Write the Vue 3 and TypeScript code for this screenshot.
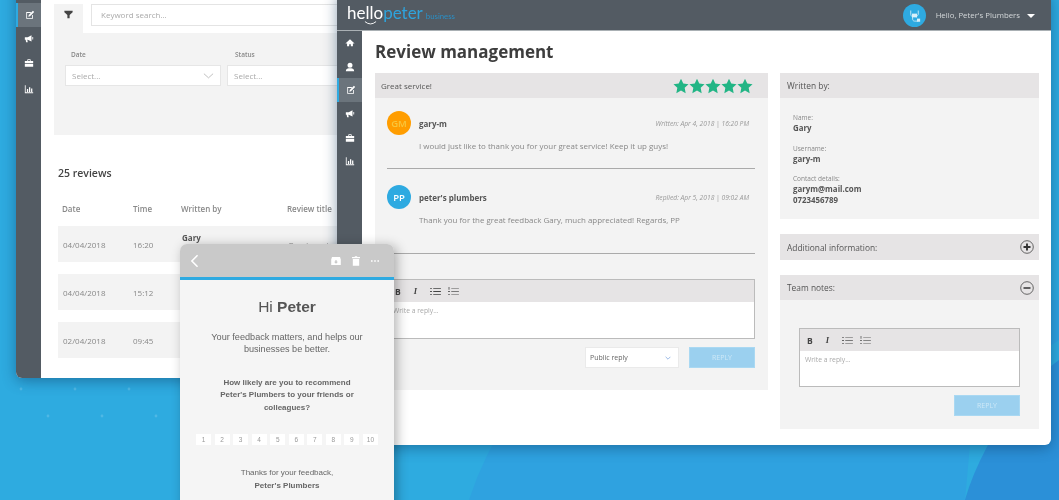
<script setup lang="ts">
interface NavItem {
  name: string
  path: string
}

interface ReviewRow {
  date: string
  time: string
  author: string
  title: string
}

interface Message {
  initials: string
  color: string
  initialsColor: string
  name: string
  stamp: string
  body: string
}

const nav: NavItem[] = [
  { name: 'home', path: 'M12 3 1 13h4v7h5v-5h4v5h5v-7h4z' },
  { name: 'user', path: 'M12 2a5.5 5.5 0 0 1 0 12 5.5 5.5 0 0 1 0-12zM2 22c0-5 4-7 7-7h6c3 0 7 2 7 7z' },
  { name: 'edit', path: 'M3 5h11v2H5v12h12v-7h2v9H3zM19 2l3 3-10 10-4 1 1-4z' },
  { name: 'promo', path: 'M2 8h7l9-5v15l-9-4H8l1 6H5l-1-6H2zM20 7h2v6h-2z' },
  { name: 'case', path: 'M9 3h6l1 1v3h6v5H2V7h6V4zm1 2v2h4V5zM2 14h20v7H2z' },
  { name: 'chart', path: 'M2 3h2v17h18v2H2zM7 12h3v7H7zM12 8h3v11h-3zM17 11h3v8h-3z' },
]

// the popup covers the last columns of rows two and three
const reviews: ReviewRow[] = [
  { date: '04/04/2018', time: '16:20', author: 'Gary', title: 'Great service!' },
  { date: '04/04/2018', time: '15:12', author: '', title: '' },
  { date: '02/04/2018', time: '09:45', author: '', title: '' },
]

const messages: Message[] = [
  {
    initials: 'GM',
    color: '#ff9d00',
    initialsColor: '#f8c63c',
    name: 'gary-m',
    stamp: 'Written: Apr 4, 2018 | 16:20 PM',
    body: 'I would just like to thank you for your great service! Keep it up guys!',
  },
  {
    initials: 'PP',
    color: '#2eaae1',
    initialsColor: '#ffffff',
    name: "peter's plumbers",
    stamp: 'Replied: Apr 5, 2018 | 09:02 AM',
    body: 'Thank you for the great feedback Gary, much appreciated! Regards, PP',
  },
]

const stars = [1, 2, 3, 4, 5]
const scores = [1, 2, 3, 4, 5, 6, 7, 8, 9, 10]
const dots = [
  [21, 389], [75, 389], [129, 389],
  [48, 416], [102, 416], [156, 416],
]
</script>

<template>
  <div class="desk">
    <svg class="backdrop" width="1059" height="500" viewBox="0 0 1059 500">
      <rect width="1059" height="500" fill="#2eabe0" />
      <path d="M520 400 Q485 450 469 500 L1059 500 L1059 300 L970 300 Z" fill="#2fa2e0" />
      <path d="M970 400 L1059 340 L1059 360 Q1005 400 988 445 Q972 475 965 500 L970 445 Z" fill="#2eabdf" />
      <path d="M1059 360 Q1005 400 988 445 Q972 475 965 500 L1059 500 Z" fill="#2b90d8" />
      <circle v-for="d in dots" :key="d[0]" :cx="d[0]" :cy="d[1]" r="1.4" fill="#fff" opacity=".16" />
    </svg>

    <!-- list window, header is off the top of the page -->
    <section class="window back">
      <div class="topbar"></div>
      <div class="frame">
        <aside class="side">
          <div v-for="item in nav" :key="item.name" class="side-item" :class="{ active: item.name === 'edit' }">
            <svg viewBox="0 0 24 24" width="10" height="10"><path :d="item.path" fill="#fff" /></svg>
          </div>
        </aside>
        <main class="list">
          <div class="filter-top">
            <div class="filter-tab">
              <svg viewBox="0 0 24 24" width="9" height="9"><path d="M1 2h22v4l-8 7v9H9v-9L1 6z" fill="#444" /></svg>
            </div>
            <div class="search">Keyword search...</div>
          </div>
          <div class="filter-body">
            <div class="filter-col date-col">
              <label>Date</label>
              <div class="fake-select">
                <span>Select...</span>
                <svg viewBox="0 0 12 6" width="11" height="6"><path d="M1 .5 6 5l5-4.500" fill="none" stroke="#aaa" stroke-width=".8" /></svg>
              </div>
            </div>
            <div class="filter-col status-col">
              <label>Status</label>
              <div class="fake-select"><span>Select...</span></div>
            </div>
          </div>
          <h3 class="count">25 reviews</h3>
          <div class="table-head">
            <span>Date</span><span>Time</span><span>Written by</span><span>Review title</span>
          </div>
          <div v-for="r in reviews" :key="r.time" class="table-row">
            <span>{{ r.date }}</span>
            <span>{{ r.time }}</span>
            <b>{{ r.author }}</b>
            <span>{{ r.title }}</span>
          </div>
        </main>
      </div>
    </section>

    <!-- review detail window -->
    <section class="window front">
      <header class="topbar">
        <div class="logo">
          <span class="hello">hello</span><span class="peter">peter</span><span class="biz">business</span>
          <svg class="smile" viewBox="0 0 14 4" width="13" height="4"><path d="M1 .5Q7 5.500 13 .5" fill="none" stroke="#fff" stroke-width="1" /></svg>
        </div>
        <div class="account">
          <span class="account-pic">
            <svg viewBox="0 0 24 24" width="15" height="15">
              <path d="M6 4v6c0 3 3 3 3 6v2c0 3 3 3 4 3h4M18 4v6c0 2-3 3-3 5" fill="none" stroke="#d9f0fa" stroke-width="1.300" />
              <rect x="8" y="9" width="8" height="6" fill="#d9f0fa" />
              <rect x="16" y="17" width="5" height="5" fill="#d9f0fa" />
            </svg>
          </span>
          <span>Hello, Peter's Plumbers</span>
          <i class="caret"></i>
        </div>
      </header>
      <div class="frame">
        <aside class="side">
          <div v-for="item in nav" :key="item.name" class="side-item" :class="{ active: item.name === 'edit' }">
            <svg viewBox="0 0 24 24" width="10" height="10"><path :d="item.path" fill="#fff" /></svg>
          </div>
        </aside>
        <main class="detail">
          <h1>Review management</h1>
          <div class="columns">
            <div class="review">
              <div class="bar">
                <span>Great service!</span>
                <div class="stars">
                  <svg v-for="s in stars" :key="s" viewBox="0 0 24 24" width="16" height="16">
                    <path d="M12 1l3.400 7.300 7.900 1-5.800 5.500 1.500 7.900-7-3.900-7 3.900 1.500-7.900L.7 9.300l7.900-1z" fill="#22b585" />
                  </svg>
                </div>
              </div>
              <div class="thread">
                <article v-for="m in messages" :key="m.name" class="message">
                  <div class="msg-head">
                    <span class="pic" :style="{ background: m.color, color: m.initialsColor }">{{ m.initials }}</span>
                    <b>{{ m.name }}</b>
                    <em>{{ m.stamp }}</em>
                  </div>
                  <p>{{ m.body }}</p>
                </article>
                <div class="editor">
                  <div class="tools">
                    <b>B</b><i>I</i>
                    <svg viewBox="0 0 12 10" width="11" height="9"><path d="M0 1h2v1H0zM0 4.500h2v1H0zM0 8h2v1H0zM3.500 1H12v1H3.500zM3.500 4.500H12v1H3.500zM3.500 8H12v1H3.500z" fill="#444" /></svg>
                    <svg viewBox="0 0 12 10" width="11" height="9"><path d="M.5 0h1v3h-1zM0 4.500h2v1H0zM0 8h2v1H0zM3.500 1H12v.7H3.500zM3.500 4.500H12v.7H3.500zM3.500 8H12v.7H3.500z" fill="#555" /></svg>
                  </div>
                  <div class="write">Write a reply...</div>
                </div>
                <div class="actions">
                  <div class="reply-type">
                    <span>Public reply</span>
                    <svg viewBox="0 0 10 6" width="6" height="4"><path d="M1 1l4 4 4-4" fill="none" stroke="#7fa8e0" stroke-width="1.300" /></svg>
                  </div>
                  <button class="reply">REPLY</button>
                </div>
              </div>
            </div>

            <div class="info">
              <div class="box">
                <div class="bar">Written by:</div>
                <dl class="facts">
                  <dt>Name:</dt>
                  <dd>Gary</dd>
                  <dt>Username:</dt>
                  <dd>gary-m</dd>
                  <dt>Contact details:</dt>
                  <dd>garym@mail.com<br />0723456789</dd>
                </dl>
              </div>
              <div class="bar extra">
                <span>Additional information:</span>
                <svg viewBox="0 0 14 14" width="14" height="14">
                  <circle cx="7" cy="7" r="6.300" fill="none" stroke="#444" stroke-width=".8" />
                  <path d="M3.500 7h7M7 3.500v7" stroke="#333" stroke-width="1.900" />
                </svg>
              </div>
              <div class="box">
                <div class="bar">
                  <span>Team notes:</span>
                  <svg viewBox="0 0 14 14" width="14" height="14">
                    <circle cx="7" cy="7" r="6.300" fill="none" stroke="#444" stroke-width=".8" />
                    <path d="M3.500 7h7" stroke="#333" stroke-width="1.600" />
                  </svg>
                </div>
                <div class="notes">
                  <div class="editor">
                    <div class="tools">
                      <b>B</b><i>I</i>
                      <svg viewBox="0 0 12 10" width="11" height="9"><path d="M0 1h2v1H0zM0 4.500h2v1H0zM0 8h2v1H0zM3.500 1H12v.7H3.500zM3.500 4.500H12v.7H3.500zM3.500 8H12v.7H3.500z" fill="#555" /></svg>
                      <svg viewBox="0 0 12 10" width="11" height="9"><path d="M.5 0h1v3h-1zM0 4.500h2v1H0zM0 8h2v1H0zM3.500 1H12v.7H3.500zM3.500 4.500H12v.7H3.500zM3.500 8H12v.7H3.500z" fill="#666" /></svg>
                    </div>
                    <div class="write">Write a reply...</div>
                  </div>
                  <button class="reply">REPLY</button>
                </div>
              </div>
            </div>
          </div>
        </main>
      </div>
    </section>

    <!-- survey mail on top -->
    <section class="mail">
      <header class="mail-bar">
        <svg viewBox="0 0 10 16" width="9" height="14"><path d="M8.500 1.500 2 8l6.500 6.500" fill="none" stroke="#fff" stroke-width="1.800" /></svg>
        <div class="mail-icons">
          <svg viewBox="0 0 12 10" width="10" height="8"><path d="M1 0h10l1 3v7H0V3zM5 4v2H3.500L6 8.500 8.500 6H7V4z" fill="#fff" /></svg>
          <svg viewBox="0 0 10 12" width="8" height="10"><path d="M3.500 0h3v1H10v1.500H0V1h3.500zM1 3.500h8V12H1z" fill="#fff" /></svg>
          <svg viewBox="0 0 10 2" width="8" height="2"><path d="M0 0h2v2H0zM4 0h2v2H4zM8 0h2v2H8z" fill="#fff" /></svg>
        </div>
      </header>
      <div class="mail-body">
        <h2>Hi <b>Peter</b></h2>
        <p class="lead">Your feedback matters, and helps our businesses be better.</p>
        <p class="ask">How likely are you to recommend Peter's Plumbers to your friends or colleagues?</p>
        <div class="scores">
          <span v-for="n in scores" :key="n">{{ n }}</span>
        </div>
        <p class="thanks">Thanks for your feedback,<br /><b>Peter's Plumbers</b></p>
      </div>
    </section>
  </div>
</template>

<style scoped>
.desk {
  position: relative;
  width: 1059px;
  height: 500px;
  overflow: hidden;
  font-family: "Open Sans", "Liberation Sans", sans-serif;
  color: #555;
  filter: blur(0.35px);
}

.backdrop {
  position: absolute;
  inset: 0;
}

.window {
  position: absolute;
  display: flex;
  flex-direction: column;
  background: #fff;
  border-radius: 6px;
  overflow: hidden;
  box-shadow: 0 3px 14px rgba(10, 50, 90, 0.45);
}

.back {
  left: 16px;
  top: -74px;
  width: 420px;
  height: 452px;
}

.front {
  left: 337px;
  top: -8px;
  width: 714px;
  height: 453px;
}

.topbar {
  flex: none;
  height: 30px;
  background: #535b63;
  border-bottom: 1px solid #aab0b4;
  box-sizing: border-box;
}

.front .topbar {
  height: 39px;
  padding: 8px 0 0 10px;
  display: flex;
  align-items: center;
  justify-content: space-between;
}

.frame {
  flex: 1;
  display: flex;
  min-height: 0;
}

.side {
  flex: none;
  width: 25px;
  background: #535b63;
}

.side-item {
  height: 23.700px;
  display: flex;
  align-items: center;
  justify-content: center;
  box-sizing: border-box;
}

.back .side-item:last-child {
  margin-top: 3px;
}

.side-item.active {
  background: #6b747c;
  border-left: 2px solid #2eaae1;
}

.logo {
  position: relative;
  display: flex;
  align-items: baseline;
  font-family: Lato, "Open Sans", sans-serif;
  font-size: 17px;
  line-height: 20px;
  margin-top: -5px;
}

.hello {
  color: #fff;
}

.peter {
  color: #2ea3dc;
}

.biz {
  margin-left: 3px;
  font-size: 7.800px;
  line-height: 10px;
  color: #2a8fc5;
}

.smile {
  position: absolute;
  left: 17px;
  bottom: -2px;
}

.account {
  display: flex;
  align-items: center;
  margin-right: 16px;
  color: #d4d8da;
  font-size: 7.800px;
}

.account-pic {
  width: 23px;
  height: 23px;
  margin-right: 10px;
  border-radius: 50%;
  background: #2eaae1;
  display: flex;
  align-items: center;
  justify-content: center;
}

.caret {
  margin-left: 7px;
  margin-top: 1px;
  border: 4px solid transparent;
  border-top-color: #fff;
  border-bottom: 0;
}

.list {
  flex: 1;
  padding: 48px 0 0 13px;
  min-width: 0;
}

.filter-top {
  display: flex;
  height: 29px;
}

.filter-tab {
  width: 29px;
  background: #f3f3f3;
  display: flex;
  justify-content: center;
  padding-top: 6px;
  box-sizing: border-box;
}

.search {
  margin-left: 8px;
  width: 330px;
  height: 22px;
  box-sizing: border-box;
  border: 1px solid #e4e4e4;
  padding-left: 9px;
  font-size: 8px;
  line-height: 20px;
  color: #aaa;
}

.filter-body {
  height: 102px;
  background: #f3f3f3;
  padding: 17px 0 0 11px;
  display: flex;
  gap: 6px;
  box-sizing: border-box;
}

.filter-col label {
  display: block;
  margin: 0 0 6px 6px;
  font-size: 6.500px;
  line-height: 9px;
  font-weight: 600;
  color: #888;
}

.status-col label {
  margin-left: 8px;
}

.date-col {
  width: 156px;
}

.status-col {
  width: 156px;
}

.fake-select {
  height: 21px;
  box-sizing: border-box;
  background: #fff;
  border: 1px solid #e6e6e6;
  padding: 0 6px 0 6px;
  display: flex;
  align-items: center;
  justify-content: space-between;
  font-size: 8px;
  color: #aaa;
}

.count {
  margin: 30px 0 0 4px;
  font-size: 10.500px;
  line-height: 16px;
  font-weight: 600;
  color: #444;
}

.table-head,
.table-row {
  display: grid;
  grid-template-columns: 70px 49px 106px 1fr;
  padding-left: 5px;
  margin-left: 4px;
  align-items: center;
  font-size: 8px;
  color: #888;
}

.table-head {
  margin-top: 21px;
  height: 12px;
  font-weight: 600;
  padding-left: 4px;
  grid-template-columns: 71px 48px 106px 1fr;
}

.table-row {
  height: 36px;
  margin-top: 12px;
  background: #f3f3f3;
}

.table-row b {
  color: #555;
  align-self: start;
  margin-top: 6px;
}

.detail {
  flex: 1;
  min-width: 0;
  padding: 0 12px 0 13px;
}

.detail h1 {
  margin: 9px 0 9px;
  font-size: 17px;
  line-height: 24px;
  font-weight: 700;
  color: #3d3d3d;
}

.columns {
  display: flex;
  gap: 12px;
  align-items: flex-start;
}

.review {
  width: 393px;
  flex: none;
  background: #f3f3f3;
}

.bar {
  height: 25px;
  padding: 0 5px 0 6px;
  background: #e6e4e5;
  display: flex;
  align-items: center;
  justify-content: space-between;
  font-size: 8px;
  color: #555;
}

.info .bar {
  padding-left: 7px;
  font-size: 8.400px;
}

.info .bar.extra {
  height: 26px;
}

.stars {
  display: flex;
  margin-right: 10px;
}

.thread {
  padding: 13px 13px 23px 12px;
  height: 292px;
  box-sizing: border-box;
}

.message {
  height: 58px;
  border-bottom: 1px solid #aaa;
  margin-bottom: 16px;
  box-sizing: border-box;
}

.message + .message {
  height: 69px;
  margin-bottom: 25px;
}

.msg-head {
  display: flex;
  align-items: center;
  font-size: 8px;
}

.pic {
  width: 24px;
  height: 24px;
  border-radius: 50%;
  display: flex;
  align-items: center;
  justify-content: center;
  font-size: 9.500px;
  font-weight: 600;
  margin-right: 8px;
}

.msg-head b {
  font-weight: 700;
  color: #555;
}

.msg-head em {
  margin-left: auto;
  margin-right: 6px;
  font-size: 6.700px;
  color: #999;
}

.message p {
  margin: 5px 0 0 32px;
  font-size: 7.950px;
  line-height: 12px;
  color: #888;
}

.editor {
  border: 1px solid #bbb;
  background: #fff;
}

.tools {
  height: 22px;
  background: #e6e4e5;
  display: flex;
  align-items: center;
  gap: 10px;
  padding-left: 7px;
  font-size: 8.500px;
  color: #444;
}

.tools i {
  font-weight: 700;
  font-family: "Liberation Serif", serif;
  margin: 0 3px 0 3px;
}

.tools svg:last-child {
  margin-left: -3px;
}

.write {
  height: 36px;
  padding: 3px 5px;
  box-sizing: border-box;
  font-size: 6.800px;
  line-height: 11px;
  color: #aaa;
}

.actions {
  display: flex;
  justify-content: flex-end;
  gap: 10px;
  margin-top: 8px;
}

.reply-type {
  width: 94px;
  height: 21px;
  box-sizing: border-box;
  background: #fff;
  border: 1px solid #eaeaea;
  padding: 0 7px 0 4px;
  display: flex;
  align-items: center;
  justify-content: space-between;
  font-size: 7px;
  color: #666;
}

.reply {
  width: 66px;
  height: 21px;
  padding: 0;
  border: 1px solid #a9d8f2;
  background: #9bd0ef;
  color: #cde8f7;
  font-family: inherit;
  font-size: 7px;
}

.info {
  width: 259px;
  flex: none;
  display: flex;
  flex-direction: column;
  gap: 15px;
}

.box {
  background: #f3f3f3;
}

.facts {
  margin: 0;
  padding: 14px 13px 14px;
  height: 121px;
  box-sizing: border-box;
  font-size: 7.900px;
}

.facts dt {
  line-height: 11px;
  font-size: 6.500px;
  color: #888;
}

.facts dd {
  margin: 0 0 8.500px;
  line-height: 11px;
  font-weight: 700;
  color: #555;
}

.notes {
  height: 129px;
  padding: 28px 19px 0;
  box-sizing: border-box;
  display: flex;
  flex-direction: column;
  align-items: flex-end;
}

.notes .editor {
  width: 100%;
  box-sizing: border-box;
  margin-bottom: 8px;
}

.notes .write {
  height: 35px;
}

.mail {
  position: absolute;
  left: 180px;
  top: 244px;
  width: 214px;
  height: 270px;
  border-radius: 7px 7px 0 0;
  overflow: hidden;
  background: #f5f5f5;
  font-family: "Liberation Sans", Arial, sans-serif;
  box-shadow: 3px 2px 12px rgba(0, 0, 0, 0.3);
}

.mail-bar {
  height: 36px;
  box-sizing: border-box;
  background: #c9c9c9;
  border-bottom: 3px solid #2eaae1;
  padding: 0 15px 0 10px;
  display: flex;
  align-items: center;
  justify-content: space-between;
}

.mail-icons {
  display: flex;
  align-items: center;
  gap: 11px;
}

.mail-body {
  text-align: center;
}

.mail-body h2 {
  margin: 17px 0 0;
  font-size: 15.500px;
  line-height: 20px;
  font-weight: 400;
  color: #555;
}

.lead {
  margin: 13.750px 24px 0;
  font-size: 9.150px;
  line-height: 12.500px;
  color: #666;
}

.ask {
  margin: 21px 38px 0;
  font-size: 8px;
  line-height: 12.500px;
  font-weight: 700;
  color: #666;
}

.scores {
  margin: 20px 16px 0;
  display: flex;
  justify-content: space-between;
}

.scores span {
  width: 15px;
  height: 11px;
  background: #fff;
  font-size: 6.500px;
  line-height: 11px;
  color: #999;
}

.thanks {
  margin: 22px 0 0;
  font-size: 8px;
  line-height: 12.500px;
  color: #666;
}
</style>
